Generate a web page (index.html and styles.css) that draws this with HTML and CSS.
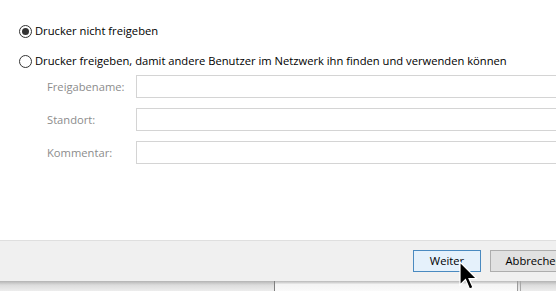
FILE: index.html
```html
<!DOCTYPE html>
<html lang="de">
<head>
<meta charset="utf-8">
<title>Druckerfreigabe</title>
<link rel="stylesheet" href="styles.css">
</head>
<body>
<div class="page">
  <div class="content">
    <label class="radio-row">
      <span class="radio checked"></span>
      <span class="radio-text">Drucker nicht freigeben</span>
    </label>
    <label class="radio-row second">
      <span class="radio"></span>
      <span class="radio-text">Drucker freigeben, damit andere Benutzer im Netzwerk ihn finden und verwenden können</span>
    </label>
    <div class="form">
      <div class="form-row"><span class="form-label">Freigabename:</span><span class="field"></span></div>
      <div class="form-row"><span class="form-label">Standort:</span><span class="field"></span></div>
      <div class="form-row"><span class="form-label">Kommentar:</span><span class="field"></span></div>
    </div>
  </div>
  <div class="footer">
    <button class="btn btn-default">Weiter</button>
    <button class="btn btn-cancel">Abbrechen</button>
  </div>
  <div class="below">
    <div class="below-left"></div>
    <div class="below-mid"></div>
    <div class="below-right"></div>
  </div>
  <svg class="cursor" width="20" height="32" viewBox="0 0 20 32">
    <path d="M1 1 L1 24 L6.5 18.5 L10.5 28 L14 26.5 L10 17.5 L17.5 17.5 Z" fill="#000" stroke="#fff" stroke-width="1.2" stroke-linejoin="miter"/>
  </svg>
</div>
</body>
</html>
```
FILE: styles.css
```css
html, body {
  margin: 0;
  padding: 0;
  background: #ffffff;
}

.page {
  position: relative;
  width: 556px;
  height: 291px;
  overflow: hidden;
  display: flex;
  flex-direction: column;
  font-family: "Open Sans", "Noto Sans", sans-serif;
  font-size: 11.2px;
  color: #000;
}

.content {
  height: 240px;
  flex: none;
  background: #fff;
  padding-top: 24px;
  box-sizing: border-box;
  display: flex;
  flex-direction: column;
}

.radio-row {
  display: flex;
  align-items: center;
  height: 14px;
  padding-left: 19px;
  gap: 3px;
}

.radio-row.second {
  margin-top: 16px;
}

.radio {
  width: 13px;
  height: 13px;
  box-sizing: border-box;
  border: 1px solid #333;
  border-radius: 50%;
  display: flex;
  align-items: center;
  justify-content: center;
  flex: none;
}

.radio.checked::after {
  content: "";
  width: 7px;
  height: 7px;
  border-radius: 50%;
  background: #333;
}

.radio-text {
  white-space: nowrap;
  line-height: 14px;
}

.form {
  margin-top: 7px;
  padding-left: 47px;
  display: flex;
  flex-direction: column;
  gap: 10px;
}

.form-row {
  display: flex;
  align-items: center;
  height: 23px;
}

.form-label {
  width: 89px;
  flex: none;
  color: #8c8c8c;
  white-space: nowrap;
}

.field {
  width: 440px;
  height: 23px;
  box-sizing: border-box;
  border: 1px solid #d4d4d4;
  background: #fff;
  flex: none;
}

.footer {
  flex: none;
  height: 41px;
  box-sizing: border-box;
  border-top: 1px solid #dfdfdf;
  background: #f0f0f0;
  display: flex;
  align-items: flex-start;
  padding-top: 9px;
  padding-left: 413px;
  gap: 9px;
}

.btn {
  flex: none;
  height: 22px;
  box-sizing: border-box;
  font-family: inherit;
  font-size: 11.2px;
  color: #000;
  padding: 0;
  margin: 0;
  border: 1px solid #adadad;
  background: #e1e1e1;
  line-height: 18px;
}

.btn-default {
  width: 68px;
  border-color: #4a8ac0;
  background: #e5f1fb;
}

.btn-cancel {
  width: 88px;
}

.below {
  flex: 1;
  display: flex;
  background: linear-gradient(#b3b3b3, #dcdcdc 40%, #ededed);
}

.below-left {
  width: 274px;
  flex: none;
}

.below-mid {
  width: 242px;
  flex: none;
  border-left: 1px solid #7f7f7f;
  border-right: 1px solid #9a9a9a;
  background: linear-gradient(#b8b8b8, #f4f4f4 35%, #fafafa);
}

.below-right {
  flex: 1;
  margin-left: 2px;
  border-left: 1px solid #a8a8a8;
}

.cursor {
  position: absolute;
  left: 459px;
  top: 261px;
}
```
